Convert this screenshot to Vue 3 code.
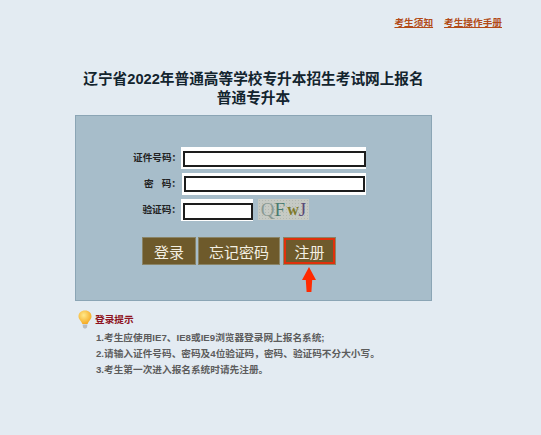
<script setup>
const tips = [
  '1.考生应使用IE7、IE8或IE9浏览器登录网上报名系统;',
  '2.请输入证件号码、密码及4位验证码，密码、验证码不分大小写。',
  '3.考生第一次进入报名系统时请先注册。',
]
</script>

<template>
  <div class="page">
    <div class="top-links">
      <a>考生须知</a>
      <a>考生操作手册</a>
    </div>

    <div class="main">
      <h1 class="title">辽宁省2022年普通高等学校专升本招生考试网上报名<br>普通专升本</h1>

      <div class="panel">
        <div class="row">
          <label class="label">证件号码：</label>
          <span class="ring"><input class="field" type="text"></span>
        </div>
        <div class="row">
          <label class="label">密&nbsp;&nbsp;&nbsp;码：</label>
          <span class="ring second"><input class="field" type="text"></span>
        </div>
        <div class="row">
          <label class="label">验证码：</label>
          <span class="ring short"><input class="field" type="text"></span>
          <span class="captcha">
            <i class="c1">Q</i><i class="c2">F</i><i class="c3">w</i><i class="c4">J</i>
          </span>
        </div>

        <div class="buttons">
          <button class="btn login" type="button">登录</button>
          <button class="btn forgot" type="button">忘记密码</button>
          <button class="btn register" type="button">
            注册
            <svg class="arrow" width="14" height="25" viewBox="0 0 14 25">
              <path d="M7 0 L14 13 L10.2 13 L9.4 25 L4.6 25 L3.8 13 L0 13 Z" fill="#ff2a00" />
            </svg>
          </button>
        </div>
      </div>

      <div class="tips">
        <div class="tips-head">
          <svg class="bulb" width="14" height="19" viewBox="0 0 14 19">
            <defs>
              <radialGradient id="glow" cx="0.4" cy="0.35" r="0.7">
                <stop offset="0" stop-color="#ffe98a" />
                <stop offset="1" stop-color="#f4a51c" />
              </radialGradient>
            </defs>
            <path d="M7 0.5 C3 0.5 0.5 3 0.5 6.4 C0.5 9.4 3.4 10.6 4.4 14 L9.6 14 C10.6 10.6 13.5 9.4 13.5 6.4 C13.5 3 11 0.5 7 0.5 Z" fill="url(#glow)" />
            <path d="M4.6 14.6 H9.4 L9 17.4 L7.8 18.6 H6.2 L5 17.4 Z" fill="#b9bcc0" />
          </svg>
          <span class="tips-title">登录提示</span>
        </div>
        <p v-for="tip in tips" :key="tip" class="tip">{{ tip }}</p>
      </div>
    </div>
  </div>
</template>

<style scoped>
.page {
  width: 541px;
  height: 435px;
  background: #e3ebf2;
  overflow: hidden;
  font-family: "Liberation Sans", "Noto Sans CJK SC", sans-serif;
}

.top-links {
  display: flex;
  justify-content: flex-end;
  gap: 11px;
  padding: 16px 39px 0 0;
  font-size: 9.67px;
  line-height: 13px;
  font-weight: bold;
}

.top-links a {
  color: #b24a17;
  text-decoration: underline;
}

.main {
  width: 357px;
  margin: 0 0 0 75px;
}

.title {
  margin: 41px -20px 0;
  font-size: 14.67px;
  line-height: 19px;
  font-weight: bold;
  color: #13242e;
  text-align: center;
}

.panel {
  box-sizing: border-box;
  height: 186px;
  margin-top: 7px;
  padding: 29px 0 0 57px;
  background: #a7bdca;
  border: 1px solid #8ba5b5;
}

.row {
  display: flex;
  align-items: center;
  height: 26px;
}

.label {
  width: 48px;
  margin-bottom: 2px;
  font-size: 9.67px;
  font-weight: bold;
  color: #222;
  text-align: right;
  white-space: nowrap;
}

.ring {
  box-sizing: border-box;
  display: block;
  width: 185px;
  height: 22px;
  padding: 4px 0 2px 2px;
  background: #fff;
}

.ring.second {
  width: 184px;
  margin-left: 1px;
  padding: 3px 1px 3px 2px;
}

.ring.short {
  width: 72px;
  padding-bottom: 1px;
}

.field {
  box-sizing: border-box;
  display: block;
  width: 100%;
  height: 100%;
  padding: 0;
  background: #fff;
  border: 2px solid #1d1d1d;
  border-radius: 0;
  outline: none;
}

.captcha {
  display: flex;
  align-items: center;
  justify-content: center;
  width: 51px;
  height: 21px;
  margin: 0 0 2px 5px;
  background-color: #c6cac4;
  background-image: radial-gradient(#b3b8b1 1px, transparent 1px);
  background-size: 3px 3px;
  font-family: "Liberation Serif", serif;
  font-size: 19px;
  line-height: 21px;
}

.captcha i {
  font-style: normal;
}

.c1 { color: #8a9a94; }
.c2 { color: #4a7a70; }
.c3 { color: #7f7a2c; margin-left: 2px; font-size: 16px; font-weight: bold; }
.c4 { color: #5a4a78; }

.buttons {
  display: flex;
  gap: 2px;
  margin: 14px 0 0 9px;
}

.btn {
  position: relative;
  box-sizing: border-box;
  height: 28px;
  padding: 0;
  background: #6e5a2b;
  border: 1px solid #8a8466;
  color: #f3efe2;
  font-family: inherit;
  font-size: 15px;
}

.login { width: 54px; }
.forgot { width: 82px; }

.register {
  width: 53px;
  margin-left: 1px;
  outline: 2px solid #e0300a;
  outline-offset: -3px;
}

.arrow {
  position: absolute;
  left: 18px;
  top: 29px;
}

.tips {
  margin: 8px 0 0 3px;
}

.tips-head {
  display: flex;
  align-items: center;
  gap: 3px;
  height: 20px;
}

.tips-title {
  font-size: 9.67px;
  font-weight: bold;
  color: #8e1220;
}

.tip {
  margin: 0 0 0 18px;
  font-size: 9.67px;
  line-height: 16px;
  font-weight: bold;
  color: #5c5c5c;
  white-space: nowrap;
}

.tips-head + .tip {
  margin-top: 1px;
}
</style>

<style>
body {
  background: #e3ebf2;
}
</style>
